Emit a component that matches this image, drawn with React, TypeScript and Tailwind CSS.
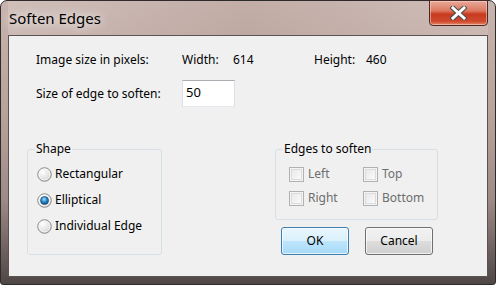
import React from 'react'

function Radio({ checked }: { checked?: boolean }) {
  return (
    <svg width="15" height="15" viewBox="0 0 15 15" className="shrink-0">
      <defs>
        <radialGradient id="radioFace" cx="0.35" cy="0.3" r="0.8">
          <stop offset="0" stopColor="#ffffff" />
          <stop offset="0.6" stopColor="#e4e4e4" />
          <stop offset="1" stopColor="#c9c9c9" />
        </radialGradient>
        <radialGradient id="radioDot" cx="0.45" cy="0.35" r="0.7">
          <stop offset="0" stopColor="#a8e2ff" />
          <stop offset="0.45" stopColor="#2a8fd0" />
          <stop offset="1" stopColor="#0b3f6e" />
        </radialGradient>
      </defs>
      <circle cx="7.5" cy="7.5" r="6.8" fill="url(#radioFace)" stroke="#8d8e8e" strokeWidth="1" />
      <circle cx="7.5" cy="7.5" r="5.3" fill="none" stroke="#f7f7f7" strokeWidth="0.8" />
      {checked && <circle cx="7.5" cy="7.5" r="4" fill="url(#radioDot)" stroke="#1c4f78" strokeWidth="0.7" />}
    </svg>
  )
}

function Check() {
  return (
    <span className="shrink-0 w-[15px] h-[15px] border border-[#b1b1b1] bg-[#f4f4f4] p-[1px]">
      <span className="block w-full h-full border border-[#dcdcdc] bg-[linear-gradient(135deg,#e9e9e9,#fafafa)]" />
    </span>
  )
}

export default function App() {
  return (
    <div className="w-[496px] h-[285px] bg-white font-['Noto_Sans',sans-serif] text-[12px] text-black">
      <div className="h-full flex flex-col rounded-t-[7px] rounded-b-[3px] border border-[#2f2b2b] px-[7px] pb-[7px] bg-[linear-gradient(to_bottom,#c8b4ae,#b8a29b_40%,#9e8b86_70%,#4e4646)]">
        {/* Title bar */}
        <div className="h-[34px] flex items-start justify-between bg-[linear-gradient(to_right,rgba(255,255,255,0.14),rgba(90,50,40,0.05)_50%,rgba(255,255,255,0.12))]">
          <div className="pt-[7px] pl-[1px] text-[15px] leading-[20px] [text-shadow:0_0_8px_rgba(255,255,255,0.9),0_0_14px_rgba(255,255,255,0.7)]">
            Soften Edges
          </div>
          <button className="-mt-px w-[59px] h-[26px] flex items-center justify-center rounded-b-[4px] border border-[#4a2a26] bg-[linear-gradient(to_bottom,#e8aa9a,#dc7a62_40%,#c8391f_55%,#cf4a2e_85%,#e68a6a)] shadow-[inset_0_0_0_1px_rgba(255,220,210,0.5)]">
            <svg width="17" height="14" viewBox="0 0 17 14">
              <path d="M3 2 L14 12 M14 2 L3 12" stroke="#4b4b4b" strokeWidth="5" strokeLinecap="square" />
              <path d="M3 2 L14 12 M14 2 L3 12" stroke="#ffffff" strokeWidth="3" strokeLinecap="square" />
            </svg>
          </button>
        </div>

        {/* Client area */}
        <div className="flex-1 border border-[#5a5352] bg-[#f0f0f0] pt-[16px] pl-[18px]">
          <div className="flex pl-[9px] leading-[16px]">
            <span className="w-[146px]">Image size in pixels:</span>
            <span className="w-[51px]">Width:</span>
            <span className="w-[81px]">614</span>
            <span className="w-[52px]">Height:</span>
            <span>460</span>
          </div>
          <div className="flex items-center mt-[12px] pl-[9px] h-[27px]">
            <span className="w-[146px]">Size of edge to soften:</span>
            <div className="w-[53px] h-[27px] bg-white border border-[#dbdfe6] border-t-[#abadb3] border-b-[#e3e9ef] pl-[3px] text-[13px] leading-[22px]">
              50
            </div>
          </div>

          <div className="flex mt-[34px]">
            <fieldset className="w-[135px] rounded-[3px] border border-[#d5dfe5] pt-[7px] pb-[7px]">
              <legend className="ml-[7px] px-[1px] leading-[16px]">Shape</legend>
              <div className="flex flex-col gap-[6px] pl-[9px]">
                <label className="flex items-center gap-[3px] h-[20px]">
                  <Radio />
                  Rectangular
                </label>
                <label className="flex items-center gap-[3px] h-[20px]">
                  <Radio checked />
                  Elliptical
                </label>
                <label className="flex items-center gap-[3px] h-[20px]">
                  <Radio />
                  Individual Edge
                </label>
              </div>
            </fieldset>

            <div className="ml-[113px] flex flex-col">
              <fieldset className="w-[163px] rounded-[3px] border border-[#d5dfe5] pt-[7px] pb-[11px] text-[#6d6d6d]">
                <legend className="ml-[7px] px-[1px] leading-[16px] text-black">Edges to soften</legend>
                <div className="grid grid-cols-[74px_1fr] gap-y-[4px] pl-[13px]">
                  <label className="flex items-center gap-[4px] h-[20px]">
                    <Check />
                    Left
                  </label>
                  <label className="flex items-center gap-[4px] h-[20px]">
                    <Check />
                    Top
                  </label>
                  <label className="flex items-center gap-[4px] h-[20px]">
                    <Check />
                    Right
                  </label>
                  <label className="flex items-center gap-[4px] h-[20px]">
                    <Check />
                    Bottom
                  </label>
                </div>
              </fieldset>
              <div className="flex gap-[16px] mt-[7px] ml-[6px]">
                <button className="w-[68px] h-[28px] rounded-[3px] border border-[#3c7fb1] bg-[linear-gradient(to_bottom,#eaf6fd,#d9f0fc_50%,#bee6fd_50%,#a7d9f5)] shadow-[inset_0_0_0_1px_rgba(255,255,255,0.7)]">
                  OK
                </button>
                <button className="w-[68px] h-[28px] rounded-[3px] border border-[#707070] bg-[linear-gradient(to_bottom,#f2f2f2,#ebebeb_50%,#dddddd_50%,#cfcfcf)] shadow-[inset_0_0_0_1px_rgba(255,255,255,0.7)]">
                  Cancel
                </button>
              </div>
            </div>
          </div>
        </div>
      </div>
    </div>
  )
}
